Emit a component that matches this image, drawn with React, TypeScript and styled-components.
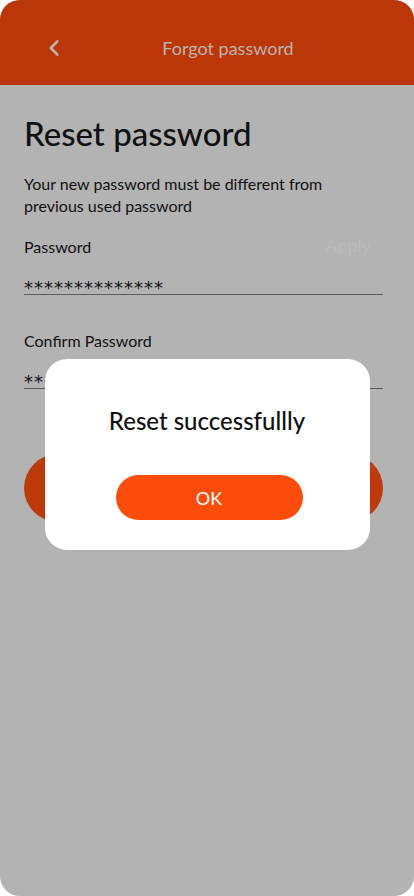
import React from 'react'
import styled, { createGlobalStyle } from 'styled-components'
import { ChevronLeft } from 'lucide-react'

const GlobalStyle = createGlobalStyle`
  html, body {
    margin: 0;
    padding: 0;
    background: #ffffff;
  }
  * {
    box-sizing: border-box;
  }
`

const App = () => {
  return (
    <>
      <GlobalStyle />
      <Screen>
        <Header>
          <BackButton aria-label="Back">
            <ChevronLeft size={26} strokeWidth={2.4} color="#bbb3ae" />
          </BackButton>
          <HeaderTitle>Forgot password</HeaderTitle>
        </Header>

        <Content>
          <Title>Reset password</Title>
          <Description>
            Your new password must be different from
            <br />
            previous used password
          </Description>

          <Field>
            <LabelRow>
              <Label>Password</Label>
              <Apply>Apply</Apply>
            </LabelRow>
            <Stars>**************</Stars>
          </Field>

          <Field>
            <LabelRow>
              <Label>Confirm Password</Label>
            </LabelRow>
            <Stars>**************</Stars>
          </Field>

          {/* the label of this button is hidden under the dialog */}
          <SubmitButton aria-label="Reset password" />
        </Content>

        <Overlay>
          <Modal>
            <ModalTitle>Reset successfullly</ModalTitle>
            <OkButton>OK</OkButton>
          </Modal>
        </Overlay>
      </Screen>
    </>
  )
}

const Screen = styled.div`
  position: relative;
  width: 414px;
  height: 896px;
  border-radius: 20px;
  overflow: hidden;
  background: #b3b3b3;
  font-family: 'Lato', 'Noto Sans', sans-serif;
  color: #111111;
`

const Header = styled.header`
  height: 85px;
  padding: 10px 32px 0 41px;
  background: #bb3709;
  display: flex;
  align-items: center;
`

const BackButton = styled.button`
  width: 33px;
  height: 30px;
  padding: 0;
  border: none;
  background: transparent;
  display: flex;
  align-items: center;
  justify-content: flex-start;
`

const HeaderTitle = styled.h1`
  flex: 1;
  margin: 0;
  text-align: center;
  font-size: 18px;
  font-weight: 400;
  color: #bbb3ae;
`

const Content = styled.main`
  padding: 28px 31px 0 24px;
  display: flex;
  flex-direction: column;
`

const Title = styled.h2`
  margin: 0;
  font-size: 33px;
  font-weight: 500;
  line-height: 40px;
  color: #111111;
`

const Description = styled.p`
  margin: 20px 0 0;
  font-size: 16px;
  line-height: 22px;
  color: #111111;
`

const Field = styled.div`
  margin-top: 17px;
  display: flex;
  flex-direction: column;
  & + & {
    margin-top: 33px;
  }
`

const LabelRow = styled.div`
  display: flex;
  align-items: center;
  justify-content: space-between;
  height: 24px;
`

const Label = styled.span`
  font-size: 16px;
  color: #111111;
`

const Apply = styled.span`
  margin-right: 12px;
  margin-top: -2px;
  font-size: 18px;
  color: #bababa;
`

const Stars = styled.div`
  margin-top: 24px;
  border-bottom: 1px solid #5a5a5a;
  font-family: 'DejaVu Sans', sans-serif;
  font-size: 18px;
  letter-spacing: 1px;
  line-height: 12px;
  color: #111111;
`

const SubmitButton = styled.button`
  margin-top: 65px;
  height: 68px;
  border: none;
  border-radius: 34px;
  background: #be3a0b;
`

const Overlay = styled.div`
  position: absolute;
  inset: 0;
  display: flex;
  justify-content: center;
  padding-top: 359px;
`

const Modal = styled.div`
  width: 325px;
  height: 191px;
  border-radius: 22px;
  background: #ffffff;
  display: flex;
  flex-direction: column;
  align-items: center;
  padding-top: 48px;
`

const ModalTitle = styled.h3`
  margin: 0;
  font-size: 24px;
  font-weight: 500;
  line-height: 28px;
  color: #111111;
`

const OkButton = styled.button`
  margin-top: 40px;
  margin-left: 4px;
  width: 187px;
  height: 45px;
  border: none;
  border-radius: 23px;
  background: #fc4c0c;
  color: #ffffff;
  font-family: inherit;
  font-size: 18px;
`

export default App
